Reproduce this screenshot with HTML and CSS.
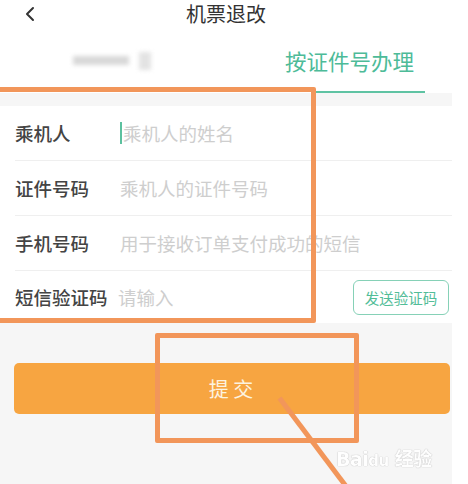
FILE: index.html
```html
<!DOCTYPE html>
<html>
<head>
    <meta charset="utf-8" />
    <title>机票退改</title>
    <link rel="stylesheet" href="styles.css">
</head>
<body>
    <div class="page">
        <div class="header">
            <svg class="back" width="12" height="16" viewBox="0 0 12 16">
                <path d="M9 2 L3 8 L9 14" fill="none" stroke="#333" stroke-width="2" stroke-linecap="round" stroke-linejoin="round"/>
            </svg>
            <div class="title">机票退改</div>
        </div>

        <div class="tabs">
            <div class="tab tab-blur">
                <span class="blur-bar"></span>
                <span class="blur-box"></span>
            </div>
            <div class="tab tab-active">按证件号办理</div>
        </div>

        <div class="band"></div>

        <div class="form">
            <div class="row">
                <div class="label">乘机人</div>
                <div class="input"><span class="cursor"></span>乘机人的姓名</div>
            </div>
            <div class="row">
                <div class="label">证件号码</div>
                <div class="input">乘机人的证件号码</div>
            </div>
            <div class="row">
                <div class="label">手机号码</div>
                <div class="input">用于接收订单支付成功的短信</div>
            </div>
            <div class="row last">
                <div class="label label-wide">短信验证码</div>
                <div class="input">请输入</div>
                <button class="send">发送验证码</button>
            </div>
        </div>

        <div class="footer">
            <button class="submit">提 交</button>
        </div>
    </div>

    <!-- annotations drawn over the screenshot -->
    <div class="mark mark-form"></div>
    <div class="mark mark-submit"></div>
    <div class="arrow"></div>
    <div class="watermark">Bai<span class="du">du</span> 经验</div>
</body>
</html>
```

FILE: styles.css
```css
body {
    margin: 0;
    font-family: "Noto Sans CJK SC", "Noto Sans", sans-serif;
    background: #fff;
    position: relative;
    width: 468px;
    height: 484px;
    overflow: hidden;
}

.page {
    width: 452px;
    background: #f6f6f6;
    height: 484px;
}

.header {
    height: 28px;
    background: #fff;
    position: relative;
    display: flex;
    justify-content: center;
    align-items: center;
}

.back {
    position: absolute;
    left: 24px;
    top: 6px;
}

.title {
    font-size: 20px;
    color: #333;
    line-height: 28px;
}

.tabs {
    height: 65px;
    background: #fff;
    display: grid;
    grid-template-columns: 1fr 1fr;
}

.tab {
    display: flex;
    align-items: center;
}

.tab-blur {
    padding-left: 73px;
    gap: 10px;
}

.blur-bar {
    width: 56px;
    height: 9px;
    background: #d8d8d8;
    filter: blur(2px);
}

.blur-box {
    width: 12px;
    height: 18px;
    background: #e3e3e3;
    filter: blur(2px);
}

.tab-active {
    padding-left: 59px;
    font-size: 21.5px;
    color: #4dbb98;
    position: relative;
}

.tab-active::after {
    content: "";
    position: absolute;
    left: 90px;
    right: 27px;
    bottom: 0;
    height: 2px;
    background: #5fc3a3;
}

.band {
    height: 13px;
}

.form {
    background: #fff;
}

.row {
    height: 54px;
    margin-left: 15px;
    border-bottom: 1px solid #efefef;
    display: flex;
    align-items: center;
    position: relative;
}

.row.last {
    height: 52px;
    border-bottom: none;
}

.label {
    width: 105px;
    font-size: 18.5px;
    font-weight: 500;
    color: #444;
}

.label-wide {
    width: 103px;
}

.input {
    font-size: 18.5px;
    color: #cecece;
    display: flex;
    align-items: center;
}

.cursor {
    width: 2px;
    height: 22px;
    background: #5cc19f;
    margin-right: 1px;
}

.send {
    margin-left: auto;
    margin-right: 3px;
    width: 96px;
    height: 35px;
    border: 1.5px solid #86d1b7;
    border-radius: 6px;
    background: #fff;
    color: #52bd98;
    font-family: "Noto Sans CJK SC", sans-serif;
    font-size: 14.5px;
    padding: 0;
}

.footer {
    padding: 40px 2px 0 14px;
}

.submit {
    width: 100%;
    height: 51px;
    border: none;
    border-radius: 5px;
    background: #f7a541;
    color: #fdf3e0;
    font-family: "Noto Sans CJK SC", sans-serif;
    font-size: 20px;
    padding: 0 2px 0 0;
}

.mark {
    position: absolute;
    border: 5px solid #f2965a;
    border-radius: 2px;
}

.mark-form {
    left: -5px;
    top: 87px;
    width: 311px;
    height: 226px;
}

.mark-submit {
    left: 155px;
    top: 333px;
    width: 194px;
    height: 100px;
}

.arrow {
    position: absolute;
    left: 277px;
    top: 398px;
    width: 5px;
    height: 110px;
    background: #f2965a;
    transform-origin: top center;
    transform: rotate(-37deg);
}

.watermark {
    position: absolute;
    left: 336px;
    top: 444px;
    font-family: "DejaVu Sans", "Noto Sans CJK SC", sans-serif;
    font-size: 19px;
    font-weight: bold;
    color: #fff;
    text-shadow: 0 0 1px #bbb, 0 0 1px #bbb;
    opacity: 0.9;
    letter-spacing: -0.5px;
}

.du {
    font-size: 15px;
}
```
